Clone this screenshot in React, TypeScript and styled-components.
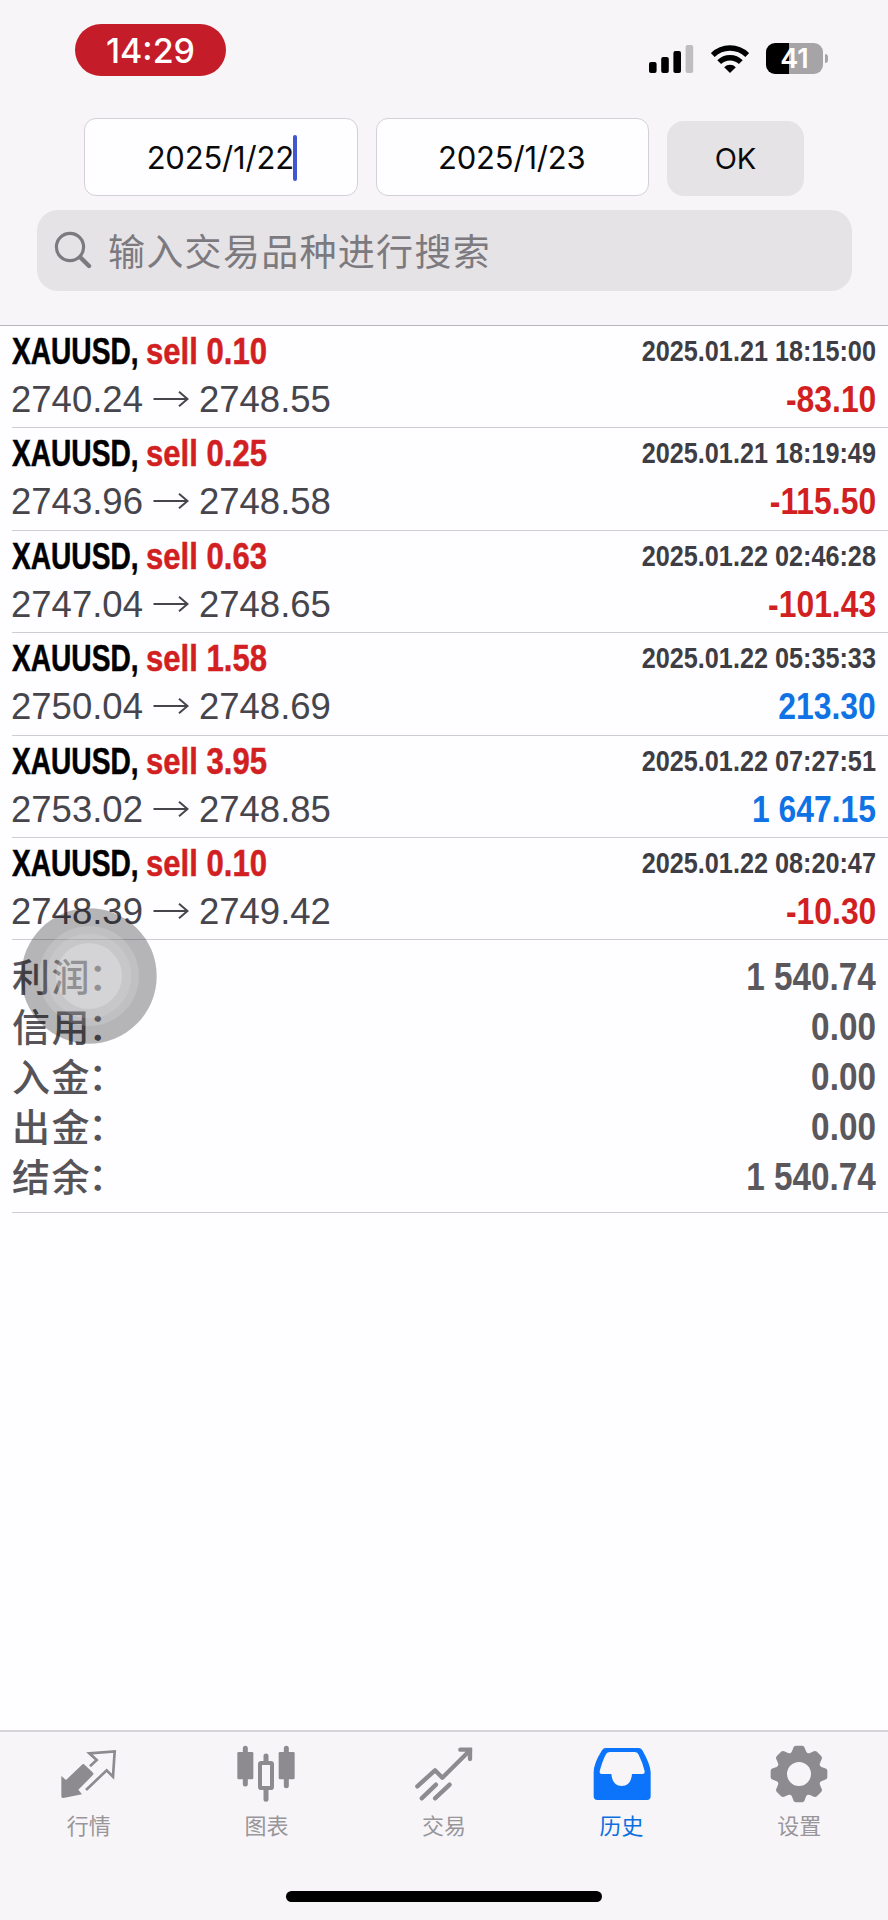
import React from "react";
import styled, { createGlobalStyle } from "styled-components";

const GlobalStyle = createGlobalStyle`
  * { box-sizing: border-box; }
  body { margin: 0; background: #fefdff; }
`;

const UI = `Inter, "Noto Sans CJK SC", sans-serif`;
const NUM = `"Liberation Sans", "Noto Sans CJK SC", sans-serif`;

const Screen = styled.div`
  position: relative;
  width: 888px;
  height: 1920px;
  display: flex;
  flex-direction: column;
  overflow: hidden;
  background: #fefdff;
  font-family: ${UI};
`;

const Header = styled.header`
  height: 326px;
  background: #f7f5f8;
  border-bottom: 1px solid #b7b5b9;
`;

const StatusBar = styled.div`
  height: 118px;
  padding: 24px 60px 0 75px;
  display: flex;
  justify-content: space-between;
  align-items: flex-start;
`;

const TimePill = styled.div`
  width: 151px;
  height: 52px;
  border-radius: 26px;
  background: #c41c29;
  color: #fff;
  font-size: 34px;
  font-weight: 500;
  line-height: 53px;
  text-align: center;
`;

const StatusIcons = styled.div`
  display: flex;
  align-items: center;
  padding-top: 19px;
`;

const WifiIcon = styled.svg`
  margin-left: 17px;
`;

const Battery = styled.div`
  width: 57px;
  height: 31px;
  margin-left: 17px;
  border-radius: 9px;
  background: linear-gradient(90deg, #000 23px, #a6a4a7 23px);
  color: #fff;
  font-size: 27px;
  font-weight: 600;
  line-height: 32px;
  text-align: center;
`;

const BatteryTip = styled.div`
  width: 3px;
  height: 9px;
  margin-left: 2px;
  border-radius: 0 4px 4px 0;
  background: #a6a4a7;
`;

const FilterRow = styled.div`
  display: flex;
  align-items: flex-end;
  gap: 18px;
  height: 78px;
  padding-left: 84px;
`;

const DateField = styled.div`
  display: flex;
  align-items: center;
  justify-content: center;
  width: 273.5px;
  height: 78px;
  border: 1px solid #d3d1d5;
  border-radius: 12px;
  background: #fefdff;
  color: #0a0a0b;
  font-size: 31px;
  letter-spacing: -0.2px;
`;

const DateText = styled.span`
  position: relative;
  margin-right: 1px;
`;

const Caret = styled.i`
  position: absolute;
  right: -3px;
  top: -4px;
  width: 4px;
  height: 46px;
  border-radius: 2px;
  background: #4257cf;
`;

const OkButton = styled.button`
  width: 137px;
  height: 75px;
  padding: 0 0 1px 0;
  border: 0;
  border-radius: 17px;
  background: #e5e3e6;
  color: #0a0a0b;
  font: 400 29px ${UI};
`;

const SearchBox = styled.div`
  display: flex;
  align-items: center;
  height: 81px;
  margin: 14px 36.5px 0 37px;
  padding-left: 17px;
  border-radius: 21px;
  background: #e5e3e6;
  color: #7c7a7f;
  font-size: 37px;
  letter-spacing: 1.3px;
`;

const SearchIcon = styled.svg`
  margin-bottom: 2px;
`;

const SearchText = styled.span`
  margin-left: 16px;
  padding-bottom: 2px;
`;

const DealRow = styled.article`
  height: 102.4px;
  margin-left: 12px;
  padding: 2px 12px 0 0;
  border-bottom: 1px solid #cfcdd1;
`;

const Line = styled.div<{ $h: number }>`
  display: flex;
  justify-content: space-between;
  align-items: center;
  height: ${(p) => p.$h}px;
  white-space: nowrap;
`;

const Title = styled.div`
  display: flex;
  font: 700 37px/48px ${NUM};
  -webkit-text-stroke: 0.5px currentColor;
`;

const Symbol = styled.span`
  width: 134px;
  color: #000;
  transform: scaleX(0.76);
  transform-origin: left;
`;

const Volume = styled.span`
  color: #d11f22;
  transform: scaleX(0.84);
  transform-origin: left;
`;

const Stamp = styled.time`
  color: #3f3d44;
  font: 700 29.5px/46px ${NUM};
  padding-bottom: 2px;
  transform: scaleX(0.855);
  transform-origin: right;
`;

const Prices = styled.div`
  display: flex;
  align-items: center;
  margin-left: -1px;
  color: #47454c;
  font: 400 36.5px/48px ${NUM};
`;

const ArrowIcon = styled.svg`
  margin: 0 10px 0 10px;
`;

const Amount = styled.span<{ $gain: boolean }>`
  padding-bottom: 2px;
  color: ${(p) => (p.$gain ? "#0f73e6" : "#d11f22")};
  font: 700 37.5px/48px ${NUM};
  transform: scaleX(0.85);
  transform-origin: right;
`;

const Summary = styled.section`
  height: 273px;
  margin-left: 12px;
  padding: 12px 12px 0 0;
  border-bottom: 1px solid #cfcdd1;
`;

const SummaryLabel = styled.span`
  display: flex;
  padding-bottom: 5px;
  color: #565458;
  font: 500 38px/50px "Noto Sans CJK SC", sans-serif;
  letter-spacing: 1.6px;
`;

const Colon = styled.span`
  margin: -1px 0 1px -3px;
`;

const SummaryValue = styled.span`
  color: #5a585c;
  font: 700 38.5px/50px ${NUM};
  transform: scaleX(0.865);
  transform-origin: right;
`;

const TouchBubble = styled.svg`
  position: absolute;
  left: 21px;
  top: 908px;
`;

const TabBar = styled.nav`
  display: grid;
  grid-template-columns: repeat(5, 1fr);
  height: 159px;
  margin-top: auto;
  padding-top: 13px;
  background: #f7f5f8;
  border-top: 2px solid #d6d4d8;
`;

const Tab = styled.div<{ $active: boolean }>`
  display: flex;
  flex-direction: column;
  align-items: center;
  color: ${(p) => (p.$active ? "#0b74fb" : "#8d8b8f")};
`;

const TabLabel = styled.span<{ $active: boolean }>`
  margin-top: 4px;
  color: ${(p) => (p.$active ? "#0b6fe0" : "#98969a")};
  font: 400 22px/34px "Noto Sans CJK SC", sans-serif;
`;

const HomeArea = styled.div`
  display: flex;
  justify-content: center;
  height: 31px;
  background: #f7f5f8;
`;

const HomeIndicator = styled.div`
  width: 316px;
  height: 11px;
  margin-top: 2px;
  border-radius: 6px;
  background: #000;
`;

type Deal = { volume: string; time: string; open: string; close: string; result: string };

const deals: Deal[] = [
  { volume: "0.10", time: "2025.01.21 18:15:00", open: "2740.24", close: "2748.55", result: "-83.10" },
  { volume: "0.25", time: "2025.01.21 18:19:49", open: "2743.96", close: "2748.58", result: "-115.50" },
  { volume: "0.63", time: "2025.01.22 02:46:28", open: "2747.04", close: "2748.65", result: "-101.43" },
  { volume: "1.58", time: "2025.01.22 05:35:33", open: "2750.04", close: "2748.69", result: "213.30" },
  { volume: "3.95", time: "2025.01.22 07:27:51", open: "2753.02", close: "2748.85", result: "1 647.15" },
  { volume: "0.10", time: "2025.01.22 08:20:47", open: "2748.39", close: "2749.42", result: "-10.30" },
];

const totals: [string, string][] = [
  ["利润", "1 540.74"],
  ["信用", "0.00"],
  ["入金", "0.00"],
  ["出金", "0.00"],
  ["结余", "1 540.74"],
];

// Eight rounded teeth around a solid ring.
const Gear = () => (
  <g fill="currentColor">
    {[0, 45, 90, 135, 180, 225, 270, 315].map((a) => (
      <path
        key={a}
        transform={`translate(87 87) rotate(${a})`}
        d="M-30 -58 Q-21 -64 -18 -76 Q-16 -85 -9 -85 H9 Q16 -85 18 -76 Q21 -64 30 -58 Z"
      />
    ))}
    <path
      fillRule="evenodd"
      d="M87 21a66 66 0 1 0 0 132a66 66 0 1 0 0-132zM87 51a36 36 0 1 1 0 72a36 36 0 1 1 0-72z"
    />
  </g>
);

const tabs: { label: string; icon: React.ReactNode; active?: boolean }[] = [
  {
    label: "行情",
    icon: (
      <>
        <path fill="currentColor" d="M4 93 L18 105 L66 59 Q70 55 74 59 L99 83 Q102 87 98 91 L55 134 L66 148 L10 159 Q4 160 4 154 Z" />
        <path
          fill="none"
          stroke="currentColor"
          strokeWidth="8"
          d="M90 64 L110 45 L88 25 L164 19 L159 95 L140 76 L78 135"
        />
      </>
    ),
  },
  {
    label: "图表",
    icon: (
      <>
        <g stroke="currentColor" strokeWidth="15" strokeLinecap="round">
          <path d="M25 10V117M148 10V122M87 33V50M87 135V163" />
        </g>
        <g fill="currentColor">
          <rect x="1" y="21" width="48" height="82" rx="4" />
          <rect x="125" y="21" width="48" height="82" rx="4" />
        </g>
        <rect x="69" y="54" width="36" height="75" rx="4" fill="none" stroke="currentColor" strokeWidth="12" />
      </>
    ),
  },
  {
    label: "交易",
    icon: (
      <g fill="none" stroke="currentColor" strokeWidth="13" strokeLinecap="round">
        <path d="M7 124 L60 76 L82 98 L165 16" strokeLinejoin="round" />
        <path d="M136 14H165V42" strokeWidth="13" />
        <path d="M20 160 L63 119M60 160 L104 119" />
      </g>
    ),
  },
  {
    label: "历史",
    active: true,
    icon: (
      <path
        fill="currentColor"
        fillRule="evenodd"
        d="M38 9 H138 Q145 9 149 17 Q173 60 173 82 V154 Q173 165 162 165 H13 Q2 165 2 154 V82 Q2 55 27 16 Q31 9 38 9 Z M50 21 Q41 21 38 29 Q28 48 20 79 Q19 87 26 87 H55 C57 110 68 123 86 123 C105 123 115 110 117 87 H149 Q156 87 155 79 Q150 55 137 29 Q134 21 126 21 Z"
      />
    ),
  },
  { label: "设置", icon: <Gear /> },
];

export default function App() {
  return (
    <Screen>
      <GlobalStyle />
      <Header>
        <StatusBar>
          <TimePill>14:29</TimePill>
          <StatusIcons>
            <svg width="45" height="28" viewBox="0 0 45 28">
              <rect x="0" y="17" width="7.6" height="11" rx="2" />
              <rect x="12.2" y="12" width="7.6" height="16" rx="2" />
              <rect x="24.4" y="6" width="7.6" height="22" rx="2" />
              <rect x="36.6" y="0" width="7.6" height="28" rx="2" fill="#bfbdc0" />
            </svg>
            <WifiIcon width="38" height="28" viewBox="0 0 38 28">
              <g fill="none" stroke="#000" strokeWidth="5.4">
                <path d="M1.8 10 A24.5 24.5 0 0 1 36.2 10" />
                <path d="M8.2 17.2 A15.4 15.4 0 0 1 29.8 17.2" />
              </g>
              <path d="M19 28 L13.2 22.2 A8.2 8.2 0 0 1 24.8 22.2 Z" />
            </WifiIcon>
            <Battery>41</Battery>
            <BatteryTip />
          </StatusIcons>
        </StatusBar>
        <FilterRow>
          <DateField>
            <DateText>
              2025/1/22
              <Caret />
            </DateText>
          </DateField>
          <DateField>
            <DateText>2025/1/23</DateText>
          </DateField>
          <OkButton>OK</OkButton>
        </FilterRow>
        <SearchBox>
          <SearchIcon width="38" height="38" viewBox="0 0 38 38" fill="none" stroke="currentColor" strokeLinecap="round">
            <circle cx="16" cy="16" r="13.6" strokeWidth="3.2" />
            <path d="M26.5 26.5 L35 35" strokeWidth="4.4" />
          </SearchIcon>
          <SearchText>输入交易品种进行搜索</SearchText>
        </SearchBox>
      </Header>

      {deals.map((d) => (
        <DealRow key={d.time}>
          <Line $h={48}>
            <Title>
              <Symbol>XAUUSD,</Symbol>
              <Volume>sell {d.volume}</Volume>
            </Title>
            <Stamp>{d.time}</Stamp>
          </Line>
          <Line $h={48}>
            <Prices>
              {d.open}
              <ArrowIcon width="36" height="18" viewBox="0 0 36 18" fill="none" stroke="currentColor" strokeWidth="2">
                <path d="M0.500 8H34M26 0.800L34.500 8L26 15.200" />
              </ArrowIcon>
              {d.close}
            </Prices>
            <Amount $gain={!d.result.startsWith("-")}>{d.result}</Amount>
          </Line>
        </DealRow>
      ))}

      <Summary>
        {totals.map(([label, value]) => (
          <Line $h={50} key={label}>
            <SummaryLabel>
              {label}
              <Colon>：</Colon>
            </SummaryLabel>
            <SummaryValue>{value}</SummaryValue>
          </Line>
        ))}
      </Summary>

      <TabBar>
        {tabs.map((t) => (
          <Tab key={t.label} $active={!!t.active}>
            <svg width="58" height="58" viewBox="0 0 174 174">
              {t.icon}
            </svg>
            <TabLabel $active={!!t.active}>{t.label}</TabLabel>
          </Tab>
        ))}
      </TabBar>
      <HomeArea>
        <HomeIndicator />
      </HomeArea>

      <TouchBubble width="137" height="137" viewBox="0 0 137 137">
        <circle cx="68" cy="68" r="67.700" fill="rgba(14,12,16,0.3)" />
        <circle cx="68" cy="68" r="50" fill="rgba(255,255,255,0.15)" />
        <circle cx="68" cy="68" r="42.500" fill="rgba(255,255,255,0.12)" />
        <circle cx="68" cy="68" r="33" fill="rgba(255,255,255,0.24)" />
      </TouchBubble>
    </Screen>
  );
}
